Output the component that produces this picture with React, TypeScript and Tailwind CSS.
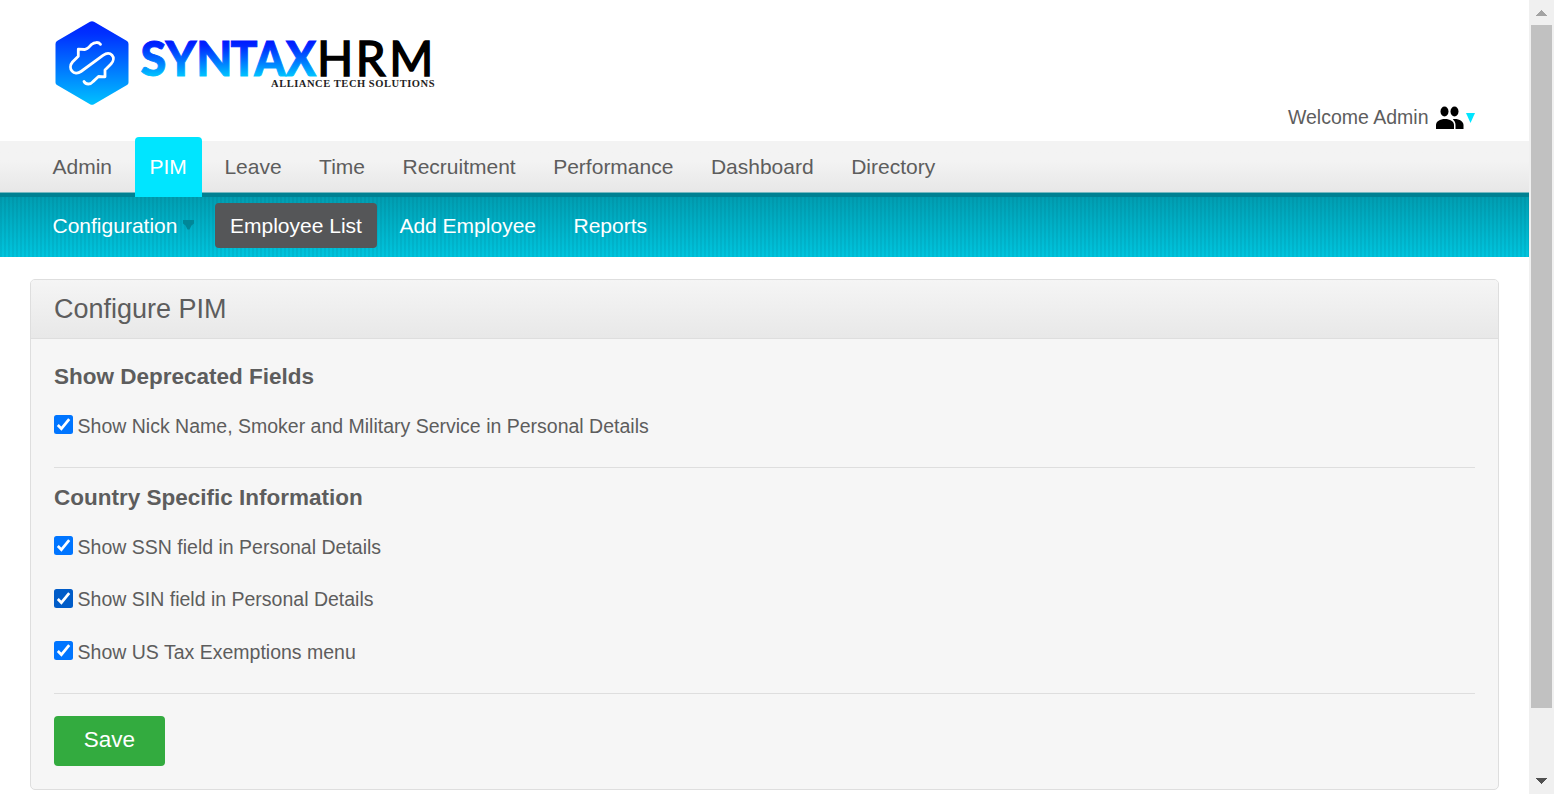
import React from "react";

const navItems = ["Admin", "PIM", "Leave", "Time", "Recruitment", "Performance", "Dashboard", "Directory"];

function Logo() {
  return (
    <svg width="400" height="96" viewBox="46 14 400 96" className="block" aria-label="SyntaxHRM">
      <defs>
        <linearGradient id="hex" x1="0" y1="0" x2="0" y2="1">
          <stop offset="0" stopColor="#0022ff" />
          <stop offset="0.15" stopColor="#0030ff" />
          <stop offset="1" stopColor="#00c2ff" />
        </linearGradient>
        <linearGradient id="word" gradientUnits="userSpaceOnUse" x1="0" y1="41" x2="0" y2="77">
          <stop offset="0" stopColor="#0018ff" />
          <stop offset="0.15" stopColor="#0028ff" />
          <stop offset="1" stopColor="#00c8ff" />
        </linearGradient>
      </defs>
      <path
        d="M90 21.8Q92 20.6 94 21.8L127 41Q128.500 42 128.500 44V82.500Q128.500 84 127 85L94 104.200Q92 105.400 90 104.200L57 85Q55.500 84 55.500 82.500V44Q55.500 42 57 41Z"
        fill="url(#hex)"
      />
      <path
        d="M100.500 44.300C98.500 41.800 94.500 42 91.500 44.500C89.500 46.500 87.500 49.800 84.500 49.500L78.300 49.200V56.200L72.500 62C67 68.500 74 76.500 81 71.500L103 55.300C110.500 50.200 117 57.500 111 64L105 70V76.800L98.500 76.500L93 81.600C90.500 84.600 86 85 84 81.500"
        fill="none"
        stroke="#fff"
        strokeWidth="2.800"
        strokeLinecap="round"
        strokeLinejoin="round"
      />
      <g fontFamily="Lato" fontSize="47.500" fontWeight="900" fill="url(#word)" stroke="url(#word)" strokeWidth="0.900">
        <text x="140.500" y="75.700" textLength="92" lengthAdjust="spacingAndGlyphs">SYN</text>
        <text x="230.500" y="75.700" textLength="85.500" lengthAdjust="spacingAndGlyphs">TAX</text>
      </g>
      <text x="317 355.800 389.300" y="76.300" fontFamily="Lato" fontSize="47.500" fontWeight="400" fill="#000" stroke="#000" strokeWidth="1.500">HRM</text>
      <text x="271" y="87.300" fontFamily="Liberation Serif" fontSize="10.500" fontWeight="700" fill="#222" textLength="163.500" lengthAdjust="spacing">ALLIANCE TECH SOLUTIONS</text>
    </svg>
  );
}

function Check({ label, dark = false }: { label: string; dark?: boolean }) {
  return (
    <label className="flex h-[22px] items-start">
      <svg width="19" height="19" viewBox="0 0 19 19" className="mr-[4.600px] shrink-0">
        <rect width="19" height="19" rx="2.500" fill={dark ? "#005cc8" : "#0075ff"} />
        <path d="M3.800 10l3.600 3.700L15.200 4.200" fill="none" stroke="#fff" strokeWidth="2.700" />
      </svg>
      <span className="whitespace-nowrap text-[19.5px] leading-[22px]">{label}</span>
    </label>
  );
}

function Scrollbar() {
  return (
    <div className="flex w-[25px] shrink-0 flex-col items-center bg-[#f0f0f0]">
      <svg width="25" height="25" viewBox="0 0 25 25" shapeRendering="crispEdges">
        <path d="M7 16L12.500 10L18 16Z" fill="#a3a3a3" />
      </svg>
      <div className="h-[683px] w-[21px] bg-[#c1c1c1]" />
      <div className="grow" />
      <svg width="25" height="25" viewBox="0 0 25 25" shapeRendering="crispEdges">
        <path d="M7 9L12.500 15L18 9Z" fill="#505050" />
      </svg>
    </div>
  );
}

export default function App() {
  return (
    <div className="flex h-[794px] w-[1554px] overflow-hidden bg-white font-['Liberation_Sans',Arial,sans-serif] text-[#5d5d5d]">
      <div className="flex min-w-0 grow flex-col">
        <header className="flex h-[141px] shrink-0 justify-between pt-[14px] pl-[46px] pr-[54px]">
          <Logo />
          <div className="flex h-6 items-center mt-[91px]">
            <span className="text-[19.5px] leading-6">Welcome Admin</span>
            <svg width="40" height="24" viewBox="0 0 40 24" className="ml-[6.500px]">
              <g fill="#000">
                <ellipse cx="9.500" cy="6.500" rx="4" ry="5" />
                <ellipse cx="19.500" cy="6.500" rx="4" ry="5" />
                <path d="M1 24V20C1 16.500 5 14 10 14S19 16.500 19 20V24Z" />
                <path d="M20.500 24V20C20.500 17.500 19.500 15.700 17.800 14.200C24 13.500 28.500 16.500 28.500 20V24Z" />
              </g>
              <path d="M31 8H40L35.500 18Z" fill="#00e5ff" />
            </svg>
          </div>
        </header>

        <nav className="flex h-[51px] shrink-0 items-start gap-[7.5px] bg-linear-to-b from-[#f3f3f3] from-40% to-[#e7e7e7] pl-[37.5px] text-[21px]">
          {navItems.map((item) =>
            item === "PIM" ? (
              <a key={item} className="relative z-10 -mt-1 h-[60px] rounded-t-[4px] bg-[#00e5ff] px-[15px] leading-[60px] text-white">{item}</a>
            ) : (
              <a key={item} className="px-[15px] leading-[52px]">{item}</a>
            )
          )}
        </nav>

        <div className="flex h-[65px] shrink-0 flex-col bg-[repeating-linear-gradient(90deg,rgba(0,70,90,0.09)_0_2px,transparent_2px_4px),linear-gradient(180deg,#009bae,#00c5de)]">
          <div className="h-px shrink-0 bg-[#75b8c0]" />
          <div className="h-1 shrink-0 bg-[#008192]" />
          <div className="flex items-start gap-[7.5px] pt-[6px] pl-[37.5px] text-[21px] leading-[45px] text-white">
            <a className="flex w-[170px] items-center pl-[15px]">
              Configuration
              <svg width="11" height="10" viewBox="0 0 11 10" className="ml-[6px] -mt-px">
                <path d="M0 0H11V3.500L8.500 5.500L6.500 9.500H4.500L2.500 5.500L0 3.500Z" fill="#008798" />
              </svg>
            </a>
            <a className="rounded-[4px] bg-[#555658] px-[15px]">Employee List</a>
            <a className="px-[15px]">Add Employee</a>
            <a className="px-[15px]">Reports</a>
          </div>
        </div>

        <main className="mt-[22px] ml-[30px] h-[511px] w-[1469px] shrink-0 rounded-[5px] border border-[#dedede] bg-[#f6f6f6]">
          <h1 className="h-[59px] rounded-t-[4px] border-b border-[#dedede] bg-linear-to-b from-[#f5f5f5] to-[#e8e8e8] pl-[23px] text-[27px] leading-[58px]">Configure PIM</h1>
          <div className="px-[23px] pt-[24px]">
            <section className="h-[105px] border-b border-[#dedede]">
              <h2 className="text-[22.5px] font-bold leading-[28px]">Show Deprecated Fields</h2>
              <div className="pt-[24px]">
                <Check label="Show Nick Name, Smoker and Military Service in Personal Details" />
              </div>
            </section>
            <section className="h-[226px] border-b border-[#dedede] pt-4">
              <h2 className="text-[22.5px] font-bold leading-[28px]">Country Specific Information</h2>
              <div className="flex flex-col pt-[24px]">
                <Check label="Show SSN field in Personal Details" />
                <div className="pt-[31px] [&_span]:-mt-px">
                  <Check label="Show SIN field in Personal Details" dark />
                </div>
                <div className="pt-[30px]">
                  <Check label="Show US Tax Exemptions menu" />
                </div>
              </div>
            </section>
            <button className="mt-[22px] flex h-[50px] w-[111px] justify-center rounded-[4px] bg-[#33ab3f] text-[22.5px] leading-[48px] text-white">Save</button>
          </div>
        </main>
      </div>
      <Scrollbar />
    </div>
  );
}
